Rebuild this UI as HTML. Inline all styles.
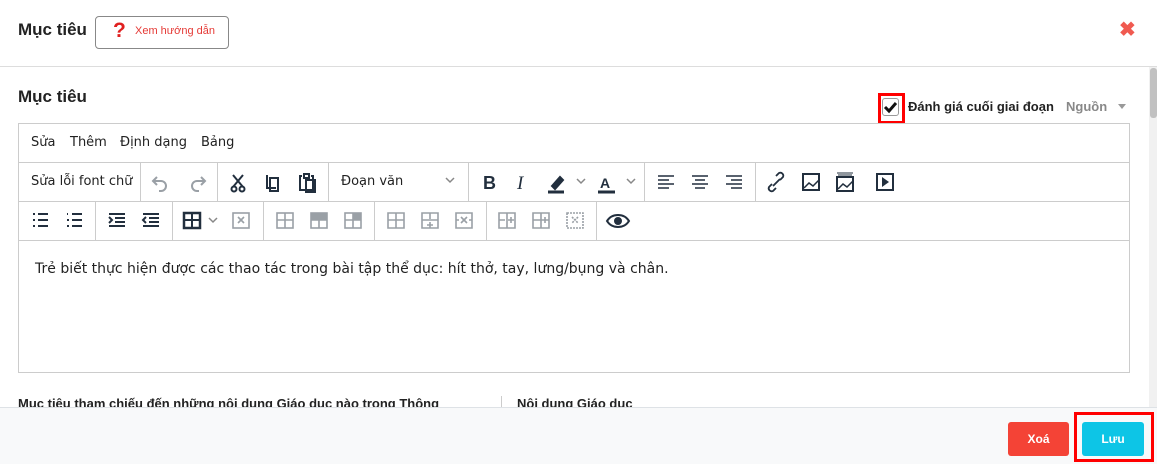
<!DOCTYPE html>
<html><head><meta charset="utf-8"><style>
*{box-sizing:border-box;margin:0;padding:0}
body{width:1157px;height:464px;overflow:hidden;background:#fff;font-family:"Liberation Sans",sans-serif;position:relative;color:#222}
.abs{position:absolute}
.sep{position:absolute;width:1px;background:#ccc}
.t{font-family:"DejaVu Sans","Liberation Sans",sans-serif}
</style></head><body>
<div class="abs" style="left:18px;top:20px;font-size:17px;font-weight:bold;color:#222">Mục tiêu</div>
<div class="abs" style="left:95px;top:16px;width:134px;height:33px;border:1px solid #888;border-radius:4px"></div>
<div class="abs" style="left:113px;top:19px;font-size:21px;font-weight:bold;color:#e02020">?</div>
<div class="abs" style="left:135px;top:25px;font-size:11px;color:#e53935">Xem hướng dẫn</div>
<div class="abs" style="left:1119px;top:17px;font-size:20px;font-weight:bold;color:#f05a50">✖</div>
<div class="abs" style="left:0;top:66px;width:1157px;height:1px;background:#ddd"></div>
<div class="abs" style="left:1149px;top:67px;width:8px;height:340px;background:#f1f1f1"></div>
<div class="abs" style="left:1150px;top:68px;width:7px;height:50px;background:#c1c1c1;border-radius:3px"></div>

<div class="abs" style="left:18px;top:87px;font-size:17px;font-weight:bold">Mục tiêu</div>
<div class="abs" style="left:878px;top:93px;width:27px;height:31px;border:3px solid #f00"></div>
<div class="abs" style="left:882px;top:98px;width:17px;height:18px;border:1px solid #999;border-radius:3px;background:#fff"></div>
<svg class="abs" style="left:883px;top:100px" width="15" height="14" viewBox="0 0 15 14"><path d="M2 7l4 4 7-8" stroke="#111" stroke-width="3" fill="none"/></svg>
<div class="abs" style="left:908px;top:99px;font-size:13px;font-weight:bold;color:#222">Đánh giá cuối giai đoạn</div>
<div class="abs" style="left:1066px;top:99px;font-size:13px;font-weight:bold;color:#888">Nguồn</div>
<div class="abs" style="left:1118px;top:104px;border-left:4px solid transparent;border-right:4px solid transparent;border-top:5px solid #999"></div>

<div class="abs" style="left:18px;top:123px;width:1112px;height:250px;border:1px solid #ccc"></div>
<div class="abs" style="left:19px;top:162px;width:1110px;height:1px;background:#ccc"></div>
<div class="abs" style="left:19px;top:201px;width:1110px;height:1px;background:#ccc"></div>
<div class="abs" style="left:19px;top:240px;width:1110px;height:1px;background:#ccc"></div>
<div class="abs t" style="left:31px;top:135px;font-size:13px">Sửa</div>
<div class="abs t" style="left:70px;top:135px;font-size:13px">Thêm</div>
<div class="abs t" style="left:120px;top:135px;font-size:13px">Định dạng</div>
<div class="abs t" style="left:201px;top:135px;font-size:13px">Bảng</div>
<div class="abs t" style="left:31px;top:174px;font-size:13px;color:#222">Sửa lỗi font chữ</div>
<div class="abs t" style="left:341px;top:174px;font-size:13px;color:#222">Đoạn văn</div>
<div class="sep" style="left:140px;top:163px;height:38px"></div>
<div class="sep" style="left:217px;top:163px;height:38px"></div>
<div class="sep" style="left:328px;top:163px;height:38px"></div>
<div class="sep" style="left:468px;top:163px;height:38px"></div>
<div class="sep" style="left:644px;top:163px;height:38px"></div>
<div class="sep" style="left:755px;top:163px;height:38px"></div>
<div class="sep" style="left:95px;top:202px;height:38px"></div>
<div class="sep" style="left:172px;top:202px;height:38px"></div>
<div class="sep" style="left:263px;top:202px;height:38px"></div>
<div class="sep" style="left:374px;top:202px;height:38px"></div>
<div class="sep" style="left:486px;top:202px;height:38px"></div>
<div class="sep" style="left:596px;top:202px;height:38px"></div>

<svg class="abs" style="left:0;top:162px" width="920" height="80" fill="none" stroke="#222f3e" stroke-width="2">
<g stroke="#9aa0a6"><path d="M157 15l-4 4 4 4M153 19h8a5 5 0 0 1 0 10h-2"/><path d="M201 15l4 4-4 4M205 19h-8a5 5 0 0 0 0 10h2"/></g>
<path d="M233 13l10 12M243 13l-10 12"/><circle cx="234" cy="27" r="2.5"/><circle cx="242" cy="27" r="2.5"/>
<path d="M267 13v13h9M270 16h8v13h-8z"/>
<path d="M302 14h-2v14h13V14h-2M304 12h5v4h-5zM306 18h9v12h-9z"/>
<path d="M446 16l4 4 4-4" stroke="#888" stroke-width="1.5"/>
<text x="483" y="27" font-family="Liberation Sans" font-weight="bold" font-size="18" fill="#222f3e" stroke="none">B</text>
<text x="517" y="27" font-family="Liberation Serif" font-style="italic" font-size="19" fill="#222f3e" stroke="none">I</text>
<path d="M552 24l8-9 3 3-8 9z" fill="#222f3e"/><path d="M548 30h16" stroke-width="3"/>
<path d="M577 17l4 4 4-4M627 17l4 4 4-4" stroke="#888" stroke-width="1.5"/>
<text x="600" y="26" font-family="Liberation Sans" font-weight="bold" font-size="14" fill="#222f3e" stroke="none">A</text><path d="M598 30h17" stroke-width="3"/>
<path d="M658 14h16M658 18h11M658 22h16M658 26h11" stroke-width="1.6"/>
<path d="M692 14h16M695 18h10M692 22h16M695 26h10" stroke-width="1.6"/>
<path d="M726 14h16M731 18h11M726 22h16M731 26h11" stroke-width="1.6"/>
<path d="M772 22l-3 3a3 3 0 0 0 4 4l3-3M780 18l3-3a3 3 0 0 0-4-4l-3 3M773 24l7-7" stroke-width="1.8"/>
<rect x="803" y="12" width="16" height="16"/><path d="M804 26l5-5 4 3 6-6" stroke-width="1.5"/>
<path d="M837 11h16M838 13h14" stroke-width="1"/><rect x="837" y="15" width="16" height="14"/><path d="M838 27l5-5 4 3 6-6" stroke-width="1.5"/>
<rect x="877" y="12" width="16" height="16"/><path d="M882 15v10l7-5z" fill="#222f3e" stroke="none"/>
</svg>
<svg class="abs" style="left:0;top:201px" width="700" height="40" fill="none" stroke="#222f3e" stroke-width="2">
<path d="M33 13h2M33 19h2M33 25h2M38 13h10M38 19h10M38 25h10"/>
<path d="M67 13h1M67 19h2M67 25h2M72 13h10M72 19h10M72 25h10" /><path d="M109 13h16M115 17h10M115 21h10M109 25h16M109 16l3 3-3 3" />
<path d="M143 13h16M149 17h10M149 21h10M143 25h16M146 16l-3 3 3 3"/>
<rect x="184" y="12" width="16" height="15" stroke-width="2.5"/><path d="M184 19h16M192 12v15"/>
<path d="M209 17l4 4 4-4" stroke="#888" stroke-width="1.5"/>
<g stroke="#9aa0a6" stroke-width="1.6">
<rect x="233" y="12" width="16" height="15"/><path d="M238 16l6 6M244 16l-6 6"/>
<rect x="277" y="12" width="16" height="15"/><path d="M277 19h16M285 12v15"/>
<rect x="311" y="12" width="16" height="15"/><path d="M311 19h16M319 12v15"/><path d="M312 13h14v5h-14z" fill="#9aa0a6"/>
<rect x="345" y="12" width="16" height="15"/><path d="M345 19h16M353 12v15"/><path d="M354 13h6v5h-6z" fill="#9aa0a6"/>
<path d="M388 12h16v15h-16zM388 19h5M399 19h5M396 12v15M393 19h6" /><path d="M422 12h16v15h-16zM422 19h16M430 12v6M427 24h6M430 21v6"/>
<path d="M456 12h16v15h-16zM456 19h3M469 19h3M461 16l6 6M467 16l-6 6"/>
<path d="M499 12h16v15h-16zM499 19h6M507 12v15M511 16v6M508 19h6"/>
<path d="M533 12h16v15h-16zM533 19h16M541 12v15M545 16v6M542 19h6"/>
<path d="M567 12h16v15h-16zM572 16l6 6M578 16l-6 6" stroke-dasharray="2 1"/>
</g>
<path d="M607 20c5-8 17-8 22 0c-5 8-17 8-22 0z"/><circle cx="618" cy="20" r="3" fill="#222f3e"/>
</svg>

<div class="abs t" style="left:35px;top:261px;font-size:14px;color:#222">Trẻ biết thực hiện được các thao tác trong bài tập thể dục: hít thở, tay, lưng/bụng và chân.</div>

<div class="abs" style="left:18px;top:396px;font-size:13px;font-weight:bold;color:#222">Mục tiêu tham chiếu đến những nội dung Giáo dục nào trong Thông</div>
<div class="abs" style="left:501px;top:396px;width:1px;height:12px;background:#ccc"></div>
<div class="abs" style="left:517px;top:396px;font-size:13px;font-weight:bold;color:#222">Nội dung Giáo dục</div>

<div class="abs" style="left:0;top:407px;width:1157px;height:57px;background:#f8f9fa;border-top:1px solid #dee2e6"></div>
<div class="abs" style="left:1008px;top:422px;width:61px;height:34px;background:#f44336;border-radius:3px;color:#fff;font-size:12px;font-weight:bold;text-align:center;line-height:34px">Xoá</div>
<div class="abs" style="left:1074px;top:412px;width:80px;height:50px;border:3px solid #f00"></div>
<div class="abs" style="left:1082px;top:422px;width:62px;height:34px;background:#0dc5e6;border-radius:3px;color:#fff;font-size:12px;font-weight:bold;text-align:center;line-height:34px">Lưu</div>
</body></html>
